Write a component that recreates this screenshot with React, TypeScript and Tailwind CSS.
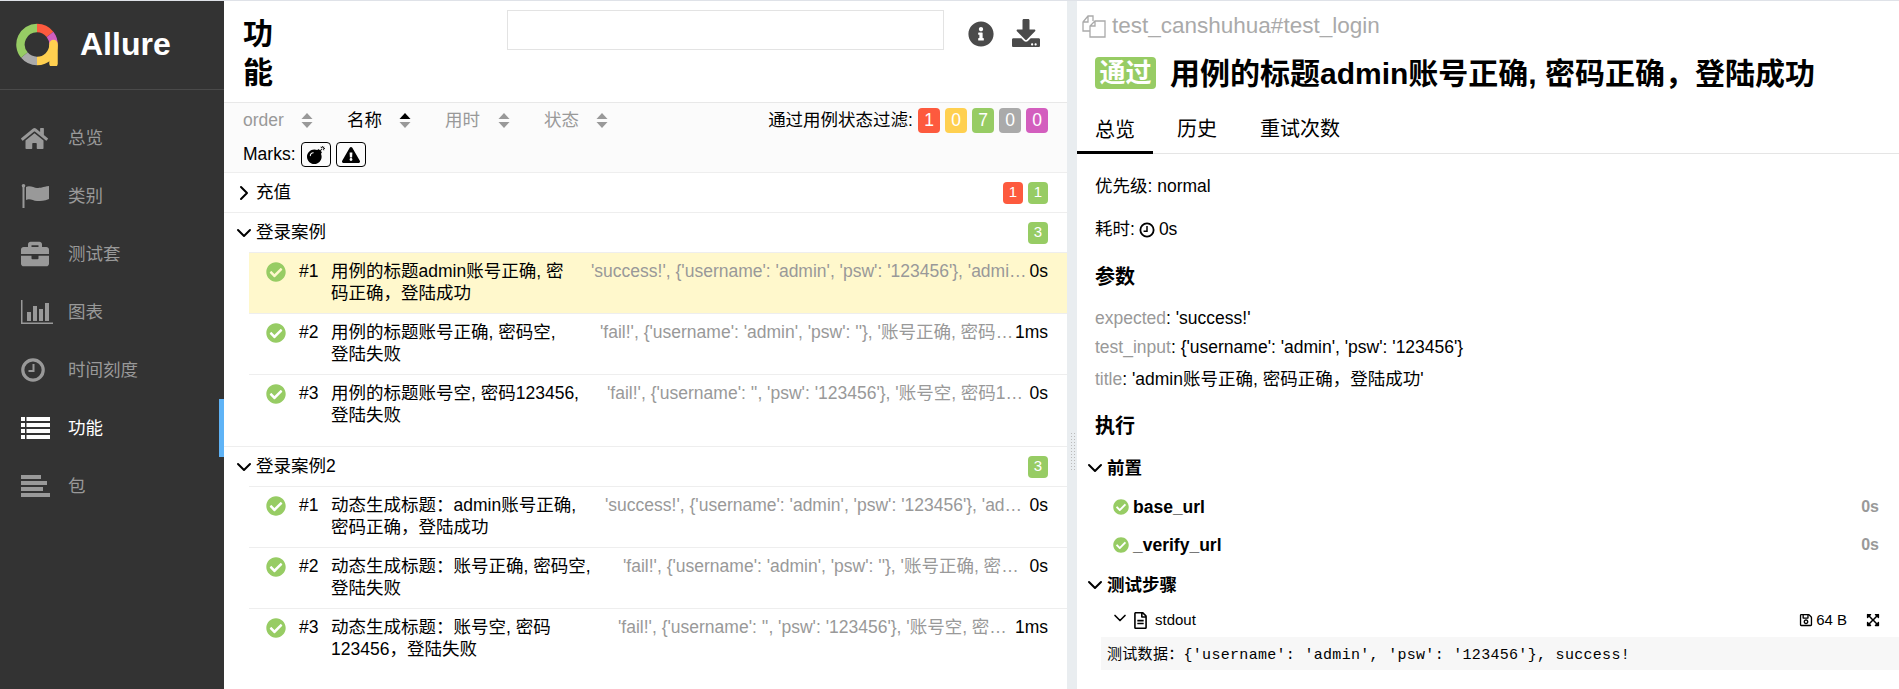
import React from "react";
import {
  FaHome, FaBriefcase, FaCheckCircle, FaInfoCircle, FaDownload, FaBomb,
  FaExclamationTriangle, FaExpandArrowsAlt, FaRegSave, FaRegFileAlt,
} from "react-icons/fa";
import { LuChevronDown, LuChevronRight } from "react-icons/lu";

const sans = "font-['Liberation_Sans','Noto_Sans_CJK_SC',sans-serif]";

function Logo() {
  const arc = (a0: number, a1: number) => {
    const r = 16.5;
    const p = (a: number) => [21 + r * Math.cos((a * Math.PI) / 180), 21.5 - r * Math.sin((a * Math.PI) / 180)];
    const [x0, y0] = p(a0);
    const [x1, y1] = p(a1);
    const large = Math.abs(a1 - a0) > 180 ? 1 : 0;
    return `M${x0} ${y0}A${r} ${r} 0 ${large} 1 ${x1} ${y1}`;
  };
  return (
    <svg width="42" height="43" viewBox="0 0 42 43" fill="none" strokeWidth="8.5">
      <path d={arc(90, 38)} stroke="#fd5a3e" />
      <path d={arc(38, 0)} stroke="#d35ebe" />
      <path d={arc(0, -90)} stroke="#ffd050" />
      <path d="M37.5 21v19.5" stroke="#ffd050" strokeLinecap="round" />
      <path d={arc(-90, -140)} stroke="#aaaaaa" />
      <path d={arc(-140, -270)} stroke="#97cc64" />
    </svg>
  );
}

const FlagIcon = () => (
  <svg width="28" height="24" viewBox="0 0 28 24" fill="currentColor">
    <rect x="1.5" y="2" width="2" height="22" />
    <circle cx="2.5" cy="1.8" r="1.8" />
    <path d="M5 3c4-2 8 1 11 1s6-1 12-2v13c-5 2-8 2-12 2s-7-3-11-1z" />
  </svg>
);
const ChartIcon = () => (
  <svg width="33" height="24" viewBox="0 0 33 24" fill="currentColor">
    <path d="M0 0h1.5v22.5H32V24H0z" />
    <rect x="6" y="12" width="4" height="9" />
    <rect x="12" y="6" width="4" height="15" />
    <rect x="18" y="9" width="4" height="12" />
    <rect x="24" y="3" width="4" height="18" />
  </svg>
);
const ClockIcon = () => (
  <svg width="24" height="24" viewBox="0 0 24 24" fill="none" stroke="currentColor">
    <circle cx="12" cy="12" r="10.2" strokeWidth="3.2" />
    <path d="M12.5 6v7H7.5" strokeWidth="2" />
  </svg>
);
const BarsIcon = () => (
  <svg width="29" height="22" viewBox="0 0 29 22" fill="currentColor">
    <rect x="0" y="0" width="20" height="4" />
    <rect x="0" y="6" width="26" height="4" />
    <rect x="0" y="12" width="22" height="4" />
    <rect x="0" y="18" width="29" height="4" />
  </svg>
);
const ListIcon = () => (
  <svg width="29" height="22" viewBox="0 0 29 22" fill="currentColor">
    {[0, 6, 12, 18].map((y) => (
      <g key={y}>
        <rect x="0" y={y} width="4" height="4" />
        <rect x="5.5" y={y} width="23.5" height="4" />
      </g>
    ))}
  </svg>
);
const CloneIcon = () => (
  <svg width="24" height="23" viewBox="0 0 24 23" fill="none" stroke="currentColor" strokeWidth="1.3">
    <path d="M1 13V7l5-6h5v5M6 1v6H1M1 13v3h7" />
    <path d="M8 22V11l5-5h10v16zM13 6v5H8" />
  </svg>
);

const nav: [string, React.ReactNode, boolean?][] = [
  ["总览", <FaHome size={27} />],
  ["类别", <FlagIcon />],
  ["测试套", <FaBriefcase size={28} />],
  ["图表", <ChartIcon />],
  ["时间刻度", <ClockIcon />],
  ["功能", <ListIcon />, true],
  ["包", <BarsIcon />],
];

function Sidebar() {
  return (
    <aside className="w-[224px] shrink-0 bg-[#333333] flex flex-col">
      <div className="h-[89px] border-b border-[#4a4a4a] flex items-center pl-[16px] gap-[22px] pb-[2px]">
        <Logo />
        <span className="text-white font-bold text-[32px]">Allure</span>
      </div>
      <nav className="pt-[19px] flex flex-col">
        {nav.map(([label, icon, active]) => (
          <div
            key={label}
            className={`h-[58px] flex items-center border-r-[5px] ${active ? "border-[#5fb3f6] text-white" : "border-transparent text-[#999999]"}`}
          >
            <span className="w-[68px] pl-[21px] flex items-center shrink-0">{icon}</span>
            <span className="text-[17.5px]">{label}</span>
          </div>
        ))}
      </nav>
    </aside>
  );
}

function SortCaret({ active }: { active?: boolean }) {
  return (
    <svg width="12" height="15" viewBox="0 0 12 15" className="shrink-0">
      <path d="M6 0l5.5 6H.5z" fill={active ? "#000" : "#999"} />
      <path d="M6 15L.5 9h11z" fill="#999" />
    </svg>
  );
}

const colors: Record<string, string> = {
  red: "bg-[#fd5a3e]",
  yellow: "bg-[#ffd050]",
  green: "bg-[#97cc64]",
  gray: "bg-[#aaaaaa]",
  purple: "bg-[#d35ebe]",
};

function Count({ c, n, big }: { c: string; n: number; big?: boolean }) {
  return (
    <span
      className={`${colors[c]} text-white rounded-[4px] flex items-center justify-center ${big ? "w-[22px] h-[25px] text-[17.5px]" : "w-[20px] h-[22px] text-[15px]"}`}
    >
      {n}
    </span>
  );
}

function Row({ i, title, w, params, time, active }: { i: number; title: string; w: string; params: string; time: string; active?: boolean }) {
  return (
    <div className={`h-[60px] flex items-start pt-[7px] pr-[19px] pl-[17px] text-[17.5px] leading-[22px] ${active ? "bg-[#fff8cc]" : ""}`}>
      <FaCheckCircle size={20} className="text-[#97cc64] shrink-0 mt-[2px]" />
      <span className="w-[32px] ml-[13px] shrink-0">#{i}</span>
      <span className={`${w} shrink-0 whitespace-pre-line`}>{title}</span>
      <span className="flex-1 min-w-0 truncate text-[#999999]">{params}</span>
      <span className="shrink-0">{time}</span>
    </div>
  );
}

const Divider = () => <div className="h-px bg-[#eeeeee]" />;

function Group({ name, last, children }: { name: string; last?: boolean; children: React.ReactNode }) {
  return (
    <div className={last ? "" : "border-b border-[#eeeeee]"}>
      <div className="h-[39px] flex items-center pl-[8px] pr-[19px] text-[17.5px]">
        <LuChevronDown size={24} strokeWidth={2} className="shrink-0" />
        <span className="flex-1">{name}</span>
        <Count c="green" n={3} />
      </div>
      <div className="ml-[25px] border-t border-[#eeeeee] pb-[11px]">{children}</div>
    </div>
  );
}

function Main() {
  return (
    <main className="w-[843px] shrink-0 flex flex-col min-h-0">
      <header className="h-[102px] shrink-0 flex items-start border-b border-[#e8e8e8]">
        <h1 className="w-[32px] ml-[19px] mt-[13px] text-[30px] leading-[39px] font-bold">功能</h1>
        <div className="w-[437px] h-[40px] mt-[9px] ml-[232px] border border-[#e3e3e3]" />
        <FaInfoCircle size={26} className="text-[#4a4a4a] ml-[24px] mt-[20px]" />
        <FaDownload size={28} className="text-[#4a4a4a] ml-[18px] mt-[18px]" />
      </header>
      <div className="h-[70px] shrink-0 bg-[#fbfbfb] border-b border-[#eeeeee] pl-[19px] pr-[19px] text-[17.5px]">
        <div className="flex items-center h-[34px]">
          <span className="text-[#999999] w-[58px]">order</span>
          <SortCaret />
          <span className="ml-[34px] w-[52px]">名称</span>
          <SortCaret active />
          <span className="ml-[34px] w-[53px] text-[#999999]">用时</span>
          <SortCaret />
          <span className="ml-[34px] w-[52px] text-[#999999]">状态</span>
          <SortCaret />
          <span className="ml-auto mr-[5px]">通过用例状态过滤:</span>
          <div className="flex gap-[5px]">
            <Count c="red" n={1} big />
            <Count c="yellow" n={0} big />
            <Count c="green" n={7} big />
            <Count c="gray" n={0} big />
            <Count c="purple" n={0} big />
          </div>
        </div>
        <div className="flex items-center h-[25px] mt-[5px]">
          <span className="mr-[5px]">Marks:</span>
          <span className="w-[30px] h-[25px] border border-black rounded-[4px] flex items-center justify-center mr-[5px]">
            <FaBomb size={18} />
          </span>
          <span className="w-[30px] h-[25px] border border-black rounded-[4px] flex items-center justify-center">
            <FaExclamationTriangle size={18} />
          </span>
        </div>
      </div>
      <div className="h-[40px] shrink-0 border-b border-[#eeeeee] flex items-center pl-[8px] pr-[19px] text-[17.5px]">
        <LuChevronRight size={24} strokeWidth={2} className="shrink-0" />
        <span className="flex-1">充值</span>
        <div className="flex gap-[5px]">
          <Count c="red" n={1} />
          <Count c="green" n={1} />
        </div>
      </div>
      <Group name="登录案例">
        <Row active i={1} w="w-[260px]" title={"用例的标题admin账号正确, 密\n码正确，登陆成功"} params="'success!', {'username': 'admin', 'psw': '123456'}, 'admin账号正确, 密码正确，登陆成功'" time="0s" />
        <Divider />
        <Row i={2} w="w-[269px]" title={"用例的标题账号正确, 密码空,\n登陆失败"} params="'fail!', {'username': 'admin', 'psw': ''}, '账号正确, 密码空，登陆失败'" time="1ms" />
        <Divider />
        <Row i={3} w="w-[276px]" title={"用例的标题账号空, 密码123456,\n登陆失败"} params="'fail!', {'username': '', 'psw': '123456'}, '账号空, 密码123456，登陆失败'" time="0s" />
      </Group>
      <Group name="登录案例2" last>
        <Row i={1} w="w-[274px]" title={"动态生成标题：admin账号正确,\n密码正确，登陆成功"} params="'success!', {'username': 'admin', 'psw': '123456'}, 'admin账号正确, 密码正确，登陆成功'" time="0s" />
        <Divider />
        <Row i={2} w="w-[292px]" title={"动态生成标题：账号正确, 密码空,\n登陆失败"} params="'fail!', {'username': 'admin', 'psw': ''}, '账号正确, 密码空，登陆失败'" time="0s" />
        <Divider />
        <Row i={3} w="w-[287px]" title={"动态生成标题：账号空, 密码\n123456，登陆失败"} params="'fail!', {'username': '', 'psw': '123456'}, '账号空, 密码123456，登陆失败'" time="1ms" />
      </Group>
    </main>
  );
}

function Gutter() {
  return (
    <div className="w-[10px] shrink-0 bg-[#e9edf0] flex items-center justify-center pt-[213px]">
      <div className="w-[5px] h-[40px] bg-[radial-gradient(circle,#bbbbbb_1px,transparent_1px)] bg-[length:3px_3px]" />
    </div>
  );
}

function Param({ k, v, cls }: { k: string; v: string; cls: string }) {
  return (
    <div className={`${cls} leading-[25px]`}>
      <span className="text-[#999999]">{k}</span>: {v}
    </div>
  );
}

function Stage({ name }: { name: string }) {
  return (
    <div className="h-[38px] flex items-center pl-[36px] pr-[20px] font-bold text-[17.5px]">
      <FaCheckCircle size={16} className="text-[#97cc64] shrink-0" />
      <span className="ml-[4px] flex-1">{name}</span>
      <span className="text-[#999999] text-[16px]">0s</span>
    </div>
  );
}

function Detail() {
  return (
    <section className="flex-1 min-w-0 flex flex-col">
      <div className="h-[43px] flex items-end pl-[5px] text-[#aaaaaa] text-[22.5px] shrink-0">
        <span className="mb-[6px] mr-[6px]"><CloneIcon /></span>
        <span className="leading-[30px] mb-[3px]">test_canshuhua#test_login</span>
      </div>
      <div className="flex items-center pl-[18px] h-[58px] shrink-0">
        <span className="bg-[#97cc64] text-white font-bold text-[26px] leading-[32px] h-[32px] w-[61px] rounded-[4px] text-center shrink-0">通过</span>
        <h2 className="ml-[14px] text-[30px] font-bold whitespace-nowrap">用例的标题admin账号正确, 密码正确，登陆成功</h2>
      </div>
      <div className="h-[52px] shrink-0 border-b border-[#e5e5e5] flex items-end text-[20px]">
        <span className="w-[76px] pl-[18px] border-b-[3px] border-black h-[39px] -mb-px">总览</span>
        <span className="ml-[24px] h-[39px]">历史</span>
        <span className="ml-[43px] h-[39px]">重试次数</span>
      </div>
      <div className="pl-[18px] text-[17.5px] leading-[25px]">
        <div className="mt-[20px]">优先级: normal</div>
        <div className="mt-[18px] flex items-center">
          耗时:
          <svg width="16" height="16" viewBox="0 0 14 14" fill="none" stroke="currentColor" className="mx-[4px]">
            <circle cx="7" cy="7" r="5.8" strokeWidth="1.6" />
            <path d="M7 3.5V8H4" strokeWidth="1.3" />
          </svg>
          0s
        </div>
        <div className="mt-[20px] text-[20px] font-bold leading-[30px]">参数</div>
        <Param cls="mt-[14px]" k="expected" v="'success!'" />
        <Param cls="mt-[4px]" k="test_input" v="{'username': 'admin', 'psw': '123456'}" />
        <Param cls="mt-[7px]" k="title" v="'admin账号正确, 密码正确，登陆成功'" />
        <div className="mt-[19px] text-[20px] font-bold leading-[30px]">执行</div>
      </div>
      <div className="mt-[12px] h-[30px] flex items-center pl-[6px] font-bold text-[17.5px]">
        <LuChevronDown size={24} strokeWidth={2} className="shrink-0" />
        <span>前置</span>
      </div>
      <div className="mt-[5px]">
        <Stage name="base_url" />
        <Stage name="_verify_url" />
      </div>
      <div className="mt-[6px] h-[30px] flex items-center pl-[6px] font-bold text-[17.5px]">
        <LuChevronDown size={24} strokeWidth={2} className="shrink-0" />
        <span>测试步骤</span>
      </div>
      <div className="mt-[8px] h-[24px] flex items-center pl-[33px] pr-[19px] text-[15px]">
        <LuChevronDown size={20} strokeWidth={2} className="shrink-0 mb-[4px]" />
        <FaRegFileAlt size={17} className="ml-[2px] shrink-0" />
        <span className="ml-[6px] flex-1">stdout</span>
        <FaRegSave size={14} />
        <span className="ml-[3px]">64 B</span>
        <FaExpandArrowsAlt size={14} className="ml-[19px]" />
      </div>
      <pre className="mt-[5px] ml-[24px] h-[33px] bg-[#f7f7f7] pl-[6px] pt-[2px] leading-[33px] text-[15px] tracking-[0.3px] font-['Liberation_Mono','Noto_Sans_CJK_SC',monospace]">
        测试数据：{"{'username': 'admin', 'psw': '123456'}"}, success!
      </pre>
    </section>
  );
}

export default function App() {
  return (
    <div className={`h-[689px] w-[1899px] overflow-hidden border-t border-[#dfe2e8] flex bg-white text-black ${sans}`}>
      <Sidebar />
      <Main />
      <Gutter />
      <Detail />
    </div>
  );
}
